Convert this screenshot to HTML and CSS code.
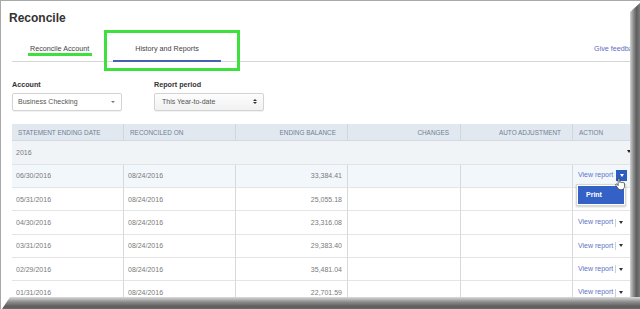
FILE: index.html
```html
<!DOCTYPE html>
<html lang="en">
  <head>
    <meta charset="UTF-8" />
    <meta name="viewport" content="width=device-width, initial-scale=1.0" />
    <link rel="stylesheet" href="styles.css">
    <title>Reconcile</title>
  </head>
  <body>
    <div class="page">
      <h1 class="title">Reconcile</h1>

      <div class="tabs">
        <a class="tab tab-first">Reconcile Account</a>
        <a class="tab tab-active">History and Reports</a>
        <a class="feedback">Give feedback</a>
      </div>

      <div class="filters">
        <div class="field">
          <label>Account</label>
          <div class="select">Business Checking <span class="caret caret-sm"></span></div>
        </div>
        <div class="field">
          <label>Report period</label>
          <div class="select select-period">This Year-to-date <span class="updown"></span></div>
        </div>
      </div>

      <table class="history">
        <colgroup>
          <col style="width: 112px" />
          <col style="width: 112px" />
          <col style="width: 112px" />
          <col style="width: 113px" />
          <col style="width: 112px" />
          <col style="width: 67px" />
        </colgroup>
        <thead>
          <tr>
            <th>Statement ending date</th>
            <th>Reconciled on</th>
            <th class="num">Ending balance</th>
            <th class="num">Changes</th>
            <th class="num">Auto adjustment</th>
            <th>Action</th>
          </tr>
        </thead>
        <tbody>
          <tr class="group">
            <td colspan="6">
              <div class="group-inner">2016 <span class="caret"></span></div>
            </td>
          </tr>
          <tr class="hover">
            <td>06/30/2016</td>
            <td>08/24/2016</td>
            <td class="num">33,384.41</td>
            <td></td>
            <td></td>
            <td class="action">
              <a class="view">View report</a><span class="toggle"><span class="caret caret-white"></span></span>
              <div class="menu"><div class="menu-item">Print</div></div>
              <svg class="hand" viewBox="0 0 16 19" width="10" height="12">
                <path d="M5 1.6C5 .8 5.6.3 6.3.3S7.6.8 7.6 1.6V7c.2-.5.8-.7 1.4-.7.7 0 1.2.5 1.3 1.1.2-.4.7-.6 1.3-.6.7 0 1.2.5 1.3 1.1.2-.3.6-.5 1.1-.5.8 0 1.3.6 1.3 1.4V13c0 3-1.8 5.5-4.3 5.5H8.5c-1.7 0-2.7-.7-3.7-2L1.2 11.5c-.4-.6-.3-1.4.3-1.8s1.4-.3 1.9.3L5 12Z" fill="#fff" stroke="#111" stroke-width="1" />
              </svg>
            </td>
          </tr>
          <tr>
            <td>05/31/2016</td>
            <td>08/24/2016</td>
            <td class="num">25,055.18</td>
            <td></td>
            <td></td>
            <td class="action"></td>
          </tr>
          <tr>
            <td>04/30/2016</td>
            <td>08/24/2016</td>
            <td class="num">23,316.08</td>
            <td></td>
            <td></td>
            <td class="action"><a class="view">View report</a><span class="split"></span><span class="caret"></span></td>
          </tr>
          <tr>
            <td>03/31/2016</td>
            <td>08/24/2016</td>
            <td class="num">29,383.40</td>
            <td></td>
            <td></td>
            <td class="action"><a class="view">View report</a><span class="split"></span><span class="caret"></span></td>
          </tr>
          <tr>
            <td>02/29/2016</td>
            <td>08/24/2016</td>
            <td class="num">35,481.04</td>
            <td></td>
            <td></td>
            <td class="action"><a class="view">View report</a><span class="split"></span><span class="caret"></span></td>
          </tr>
          <tr>
            <td>01/31/2016</td>
            <td>08/24/2016</td>
            <td class="num">22,701.59</td>
            <td></td>
            <td></td>
            <td class="action"><a class="view">View report</a><span class="split"></span><span class="caret"></span></td>
          </tr>
        </tbody>
      </table>

      <!-- highlight marks drawn over the screenshot -->
      <div class="mark-box"></div>
      <div class="mark-line"></div>

      <!-- frame shadow -->
      <div class="shade-right"></div>
      <div class="shade-bottom"></div>
    </div>
  </body>
</html>
```

FILE: styles.css
```css
* {
  margin: 0;
  padding: 0;
  box-sizing: border-box;
}

body {
  width: 640px;
  height: 309px;
  overflow: hidden;
  background: #fff;
  font-family: "Liberation Sans", Arial, sans-serif;
  color: #555;
}

.page {
  position: relative;
  width: 640px;
  height: 309px;
  overflow: hidden;
  padding-top: 11px;
  box-shadow: inset 1px 1px 0 #a8a8a8;
}

.title {
  margin-left: 9px;
  font-size: 12px;
  line-height: 14px;
  font-weight: bold;
  color: #333;
}

/* tabs */
.tabs {
  display: flex;
  align-items: flex-start;
  height: 25px;
  margin: 12px 0 0 12px;
  border-bottom: 1px solid #d6d6d6;
}

.tab {
  height: 25px;
  margin-bottom: -1px;
  font-size: 7.2px;
  line-height: 23px;
  color: #444;
  border-bottom: 2px solid transparent;
}

.tab-first {
  width: 101px;
  padding-left: 18px;
}

.tab-active {
  width: 108px;
  text-align: center;
  border-bottom-color: #4660b4;
}

.feedback {
  margin-left: auto;
  font-size: 7.2px;
  line-height: 23px;
  color: #5b6dc2;
  white-space: nowrap;
}

/* filters */
.filters {
  display: flex;
  gap: 32px;
  margin: 18px 0 0 12px;
}

.field {
  width: 110px;
}

.field label {
  display: block;
  font-size: 7.2px;
  line-height: 10px;
  font-weight: bold;
  color: #333;
}

.select {
  display: flex;
  align-items: center;
  justify-content: space-between;
  height: 18px;
  margin-top: 2.5px;
  padding: 0 6px 0 5px;
  font-size: 7px;
  color: #555;
  border: 1px solid #d3d3d3;
  border-radius: 2px;
  box-shadow: 0 1px 1px rgba(0, 0, 0, 0.06);
}

.select-period {
  padding-left: 7px;
  background: linear-gradient(#fdfdfd, #f1f1f1);
}

.updown {
  display: inline-flex;
  flex-direction: column;
  gap: 1px;
}

.updown::before,
.updown::after {
  content: "";
  border-left: 2px solid transparent;
  border-right: 2px solid transparent;
}

.updown::before {
  border-bottom: 2.5px solid #333;
}

.updown::after {
  border-top: 2.5px solid #333;
}

.caret {
  display: inline-block;
  width: 0;
  height: 0;
  border-left: 2.5px solid transparent;
  border-right: 2.5px solid transparent;
  border-top: 3px solid #333;
}

.caret-sm {
  border-left-width: 2px;
  border-right-width: 2px;
  border-top: 2px solid #777;
}

.caret-white {
  border-top-color: #fff;
}

/* table */
.history {
  width: 628px;
  margin: 13.5px 0 0 12px;
  table-layout: fixed;
  border-collapse: separate;
  border-spacing: 0;
}

.history th {
  height: 17.4px;
  padding: 0 6px;
  font-size: 6.4px;
  font-weight: normal;
  text-align: left;
  text-transform: uppercase;
  color: #6f8095;
  background: #e2e8ef;
  border-right: 1px solid #cfd7e1;
  border-bottom: 1px solid #d3dae3;
  white-space: nowrap;
}

.history th.num {
  text-align: right;
  padding-right: 11px;
}

.group td {
  height: 22.3px;
  padding: 0 6px 2px;
  font-size: 7px;
  color: #555;
  background: #f1f4f7;
  border-bottom: 1px solid #e3e3e3;
}

.group-inner {
  display: flex;
  align-items: center;
}

.group-inner .caret {
  margin: -3px 5.5px 0 auto;
  border-top-color: #222;
}

.history td {
  height: 23.33px;
  padding: 0 4px;
  font-size: 7px;
  color: #7a7a7a;
  white-space: nowrap;
}

.history tbody tr:not(.group) td {
  border-bottom: 1px solid #e4e4e4;
  border-right: 1px solid #d8d8d8;
}

.history td.num {
  text-align: right;
  padding-right: 5px;
}

.hover td {
  background: #f2f7fc;
}

.action {
  position: relative;
  padding-left: 5px !important;
}

.view {
  color: #5c74c6;
}

.split {
  display: inline-block;
  width: 1px;
  height: 8px;
  margin: 0 3px 0 2px;
  vertical-align: middle;
  background: #d0d0d0;
}

.action .caret {
  vertical-align: middle;
}

.toggle {
  display: inline-flex;
  align-items: center;
  justify-content: center;
  width: 11px;
  height: 11px;
  margin-left: 3px;
  vertical-align: middle;
  background: #2f5bbf;
}

.menu {
  position: absolute;
  left: 3px;
  top: 19px;
  width: 50px;
  padding: 1px;
  background: #fff;
  border: 1px solid #d6d6d6;
  box-shadow: 0 1px 2px rgba(0, 0, 0, 0.2);
  z-index: 2;
}

.menu-item {
  height: 18px;
  padding-left: 8px;
  font-size: 7px;
  line-height: 18px;
  font-weight: bold;
  color: #fff;
  background: #3461c5;
}

.hand {
  position: absolute;
  left: 42px;
  top: 13px;
  z-index: 3;
}

/* green marks */
.mark-box {
  position: absolute;
  left: 104px;
  top: 30px;
  width: 136px;
  height: 41px;
  border: 3px solid #3ee03e;
}

.mark-line {
  position: absolute;
  left: 28px;
  top: 53px;
  width: 64px;
  height: 3px;
  background: #3ee03e;
}

/* frame shadow */
.shade-right {
  position: absolute;
  top: 0;
  right: 0;
  width: 10px;
  height: 309px;
  background: linear-gradient(to right, #d2d2d2, #8c8c8c 35%, #5e5e5e 65%, #7a7a7a);
  clip-path: polygon(0 12px, 100% 3px, 100% 100%, 0 100%);
  z-index: 5;
}

.shade-bottom {
  position: absolute;
  left: 0;
  bottom: 0;
  width: 640px;
  height: 12px;
  background: linear-gradient(#dcdcdc, #8e8e8e 40%, #5c5c5c 80%, #6c6c6c);
  clip-path: polygon(10px 0, 100% 0, 100% 100%, 2px 100%);
  z-index: 5;
}
```
